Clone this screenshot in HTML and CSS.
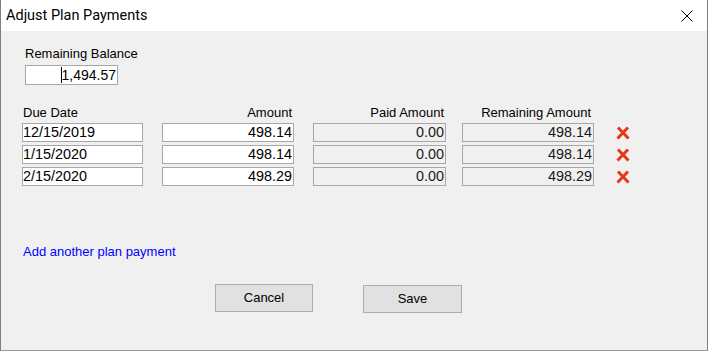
FILE: index.html
```html
<!DOCTYPE html>
<html>
<head>
<meta charset="utf-8">
<link rel="stylesheet" href="styles.css">
</head>
<body>
<div class="window">
  <div class="titlebar">
    <span class="title">Adjust Plan Payments</span>
    <svg class="close" width="12" height="12" viewBox="0 0 12 12"><path d="M0.5 0.5 L11.5 11.5 M11.5 0.5 L0.5 11.5" stroke="#000" stroke-width="1" fill="none"/></svg>
  </div>
  <div class="content">
    <div class="label bal-label">Remaining Balance</div>
    <div class="field bal-field"><span class="caret"></span>1,494.57</div>

    <div class="row head">
      <div class="c-due">Due Date</div>
      <div class="c-amt">Amount</div>
      <div class="c-paid">Paid Amount</div>
      <div class="c-rem">Remaining Amount</div>
    </div>

    <div class="row line">
      <div class="field c-due">12/15/2019</div>
      <div class="field c-amt num">498.14</div>
      <div class="field ro c-paid num">0.00</div>
      <div class="field ro c-rem num">498.14</div>
      <svg class="del" width="14" height="14" viewBox="0 0 14 14"><path d="M2 1.5 L12.5 12.5 M12 1.5 L1.5 12.5" stroke="#e5371c" stroke-width="3" fill="none"/></svg>
    </div>
    <div class="row line">
      <div class="field c-due">1/15/2020</div>
      <div class="field c-amt num">498.14</div>
      <div class="field ro c-paid num">0.00</div>
      <div class="field ro c-rem num">498.14</div>
      <svg class="del" width="14" height="14" viewBox="0 0 14 14"><path d="M2 1.5 L12.5 12.5 M12 1.5 L1.5 12.5" stroke="#e5371c" stroke-width="3" fill="none"/></svg>
    </div>
    <div class="row line">
      <div class="field c-due">2/15/2020</div>
      <div class="field c-amt num">498.29</div>
      <div class="field ro c-paid num">0.00</div>
      <div class="field ro c-rem num">498.29</div>
      <svg class="del" width="14" height="14" viewBox="0 0 14 14"><path d="M2 1.5 L12.5 12.5 M12 1.5 L1.5 12.5" stroke="#e5371c" stroke-width="3" fill="none"/></svg>
    </div>

    <div class="link">Add another plan payment</div>

    <div class="buttons">
      <div class="btn cancel">Cancel</div>
      <div class="btn save">Save</div>
    </div>
  </div>
</div>
</body>
</html>
```

FILE: styles.css
```css
html, body {
  margin: 0;
  padding: 0;
  background: #f0f0f0;
}
.window {
  width: 708px;
  height: 351px;
  box-sizing: border-box;
  border-left: 1px solid #7f7f7f;
  border-right: 1px solid #7f7f7f;
  border-bottom: 1px solid #9a9a9a;
  background: #f0f0f0;
  font-family: "Liberation Sans", Arial, sans-serif;
  font-size: 13px;
  color: #000;
  overflow: hidden;
}
.titlebar {
  height: 31px;
  background: #fff;
  display: flex;
  align-items: center;
  justify-content: space-between;
  padding: 0 14px 0 5px;
}
.title {
  font-family: Roboto, "Liberation Sans", sans-serif;
  font-size: 14.5px;
  margin-top: -1px;
}
.close {
  display: block;
  margin-top: 1px;
}
.content {
  padding: 15px 0 0 21px;
}
.label {
  line-height: 15px;
}
.bal-label {
  margin-left: 3px;
}
.field {
  box-sizing: border-box;
  height: 19px;
  line-height: 17px;
  border: 1px solid #a7a7a7;
  background: #fff;
  font-size: 14.4px;
  padding: 0 1px 0 0;
  white-space: nowrap;
  overflow: hidden;
}
.field.ro {
  background: #f0f0f0;
  color: #1a1a1a;
}
.num {
  text-align: right;
}
.bal-field {
  margin-top: 4px;
  margin-left: 3px;
  width: 93px;
  height: 20px;
  line-height: 18px;
  text-align: right;
  font-size: 14px;
}
.caret {
  display: inline-block;
  width: 1px;
  height: 16px;
  background: #000;
  vertical-align: -3px;
}
.row {
  display: flex;
  align-items: center;
}
.head {
  margin-top: 20px;
  line-height: 15px;
}
.head .c-due {
  padding-left: 1px;
  box-sizing: border-box;
}
.head .c-amt,
.head .c-paid {
  text-align: right;
  padding-right: 2px;
  box-sizing: border-box;
}
.head .c-rem {
  text-align: right;
  padding-right: 3px;
  box-sizing: border-box;
}
.line {
  margin-top: 3px;
}
.c-due {
  width: 121px;
}
.c-amt {
  width: 132px;
  margin-left: 19px;
}
.c-paid {
  width: 133px;
  margin-left: 19px;
}
.c-rem {
  width: 132px;
  margin-left: 16px;
}
.del {
  display: block;
  margin-left: 22px;
  margin-top: 1px;
}
.link {
  margin-top: 58px;
  margin-left: 1px;
  line-height: 15px;
  color: #0000ff;
}
.buttons {
  margin-top: 25px;
  display: flex;
  align-items: flex-start;
}
.btn {
  box-sizing: border-box;
  height: 28px;
  line-height: 26px;
  border: 1px solid #adadad;
  background: #e1e1e1;
  text-align: center;
}
.cancel {
  width: 98px;
  margin-left: 193px;
}
.save {
  width: 99px;
  margin-left: 50px;
  margin-top: 1px;
}
```
